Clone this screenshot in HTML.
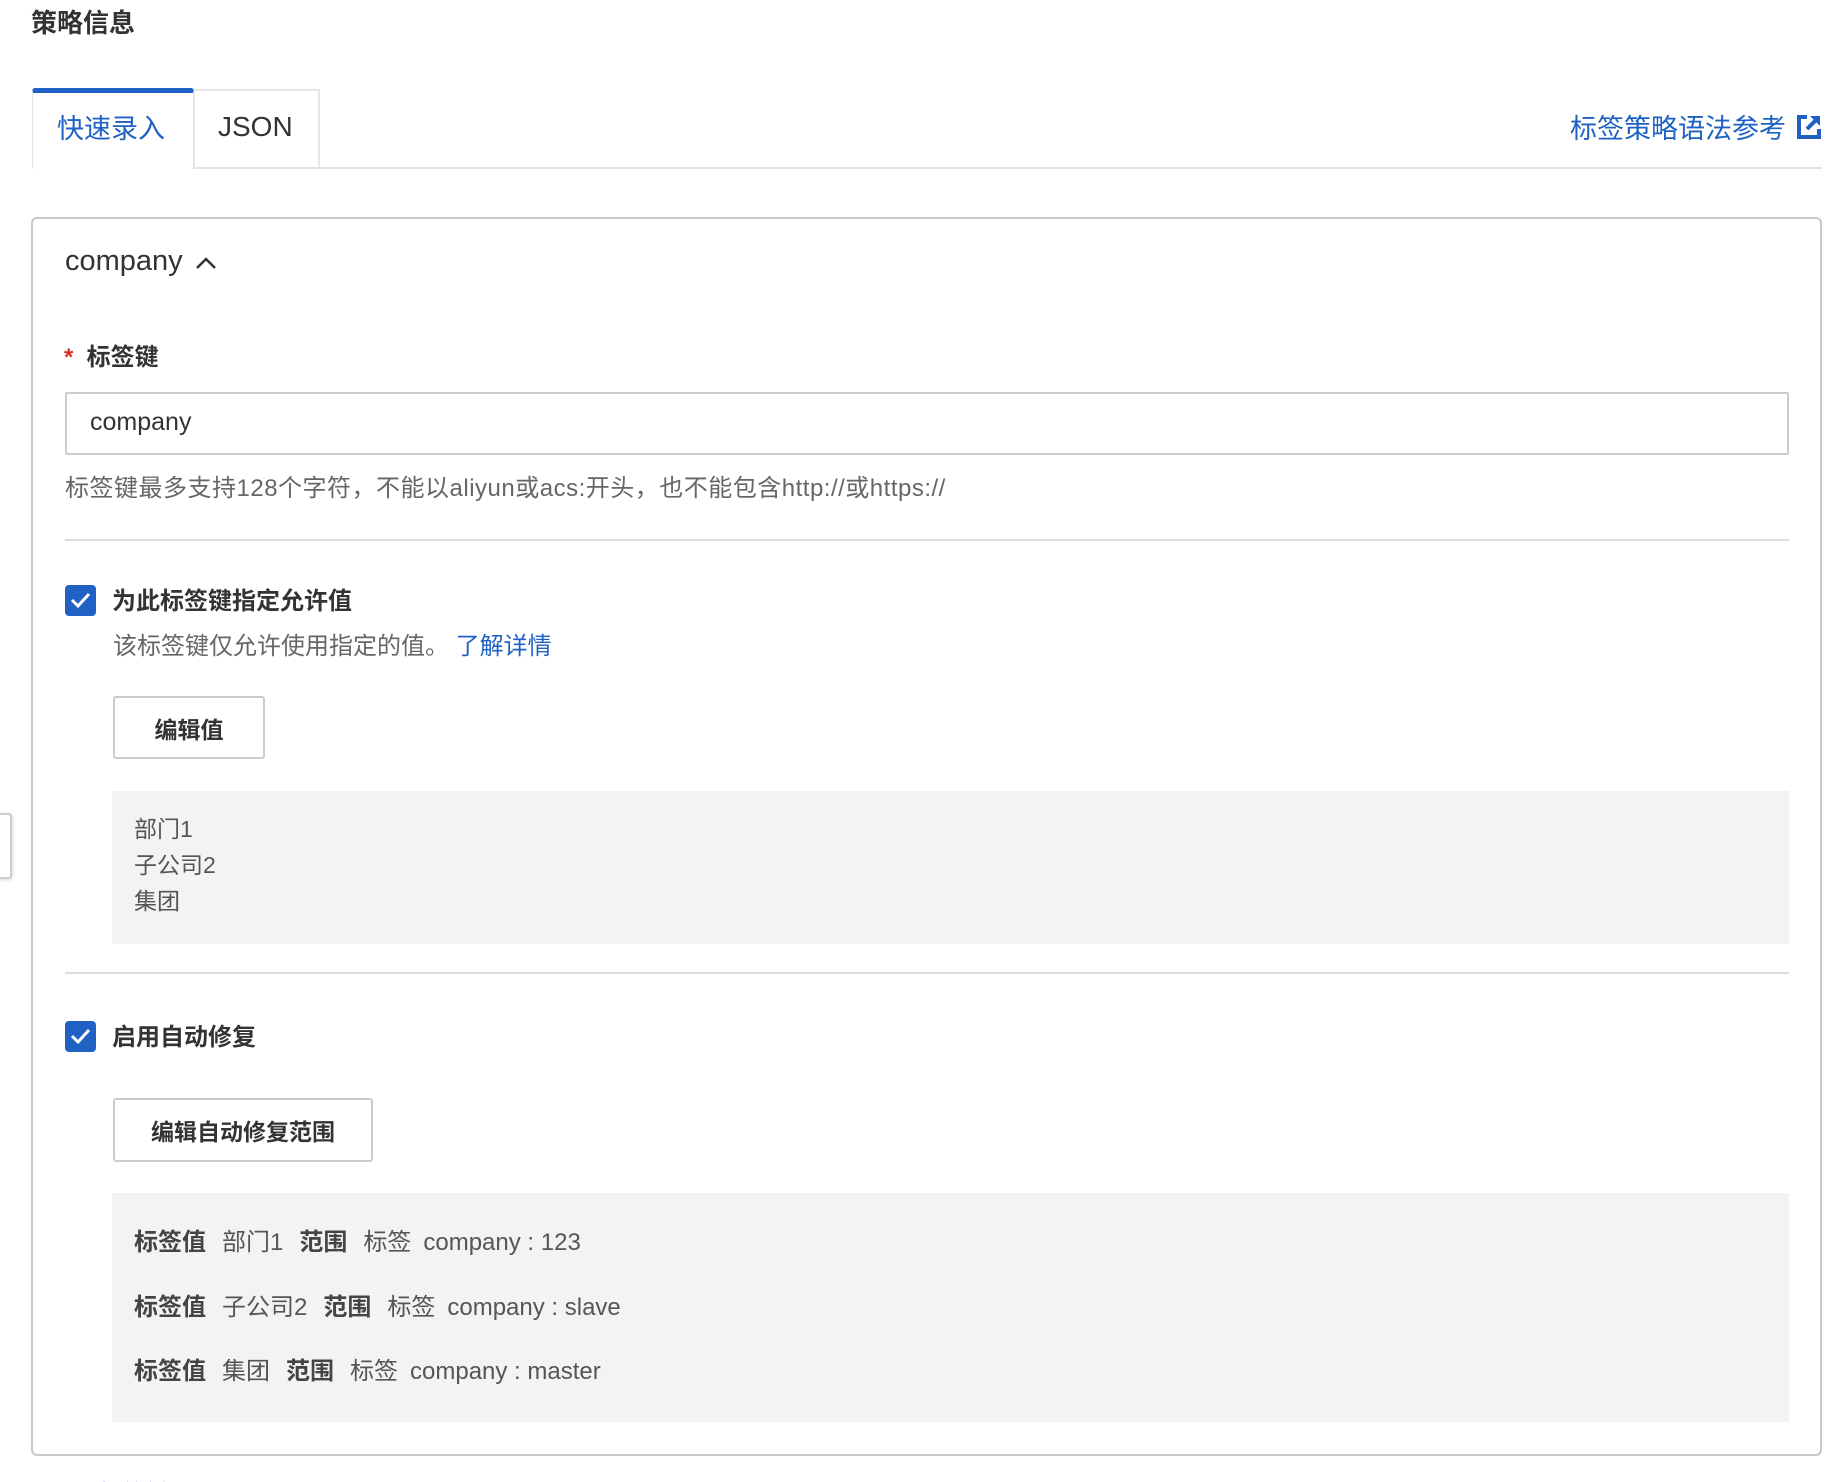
<!DOCTYPE html>
<html><head><meta charset="utf-8"><style>
*{margin:0;padding:0;box-sizing:border-box}
html,body{width:1844px;height:1482px;overflow:hidden;background:#fff}
body{position:relative;font-family:"Liberation Sans","Noto Sans CJK SC",sans-serif;color:#333}
.a{position:absolute;white-space:nowrap}
.blue{color:#2062c4}
.b{font-weight:bold}
.cb{position:absolute;width:31px;height:31px;background:#2062c4;border-radius:4px}
.btn{position:absolute;border:2px solid #ccc;border-radius:3px;background:#fff;font-size:23px;font-weight:bold;display:flex;align-items:center;justify-content:center;color:#333}
.gray{position:absolute;background:#f2f3f5}
.hr{position:absolute;height:2px;background:#ddd}
.row{position:absolute;left:134px;font-size:24px;color:#555}
.row b{color:#444}
.row span{margin-right:16px}
.row span.k{margin-right:12px}
</style></head><body>
<div class="a b" style="left:31px;top:3px;font-size:26px;color:#333">策略信息</div>

<div class="a" style="left:32px;top:88px;width:162px;height:81px;border:1px solid #e3e3e3;border-bottom:none;border-top:5px solid #2062c4;border-radius:3px 3px 0 0;background:#fff;z-index:2"></div>
<div class="a blue" style="left:57px;top:107px;font-size:27px;z-index:3">快速录入</div>
<div class="a" style="left:193px;top:89px;width:127px;height:79px;border:2px solid #e6e6e6;border-bottom:none"></div>
<div class="a" style="left:218px;top:111px;font-size:28px;color:#333">JSON</div>
<div class="hr" style="left:32px;top:167px;width:1790px;background:#e3e3e3"></div>
<div class="a blue" style="left:1570px;top:107px;font-size:27px">标签策略语法参考</div>
<svg class="a" style="left:1796px;top:114px" width="26" height="26" viewBox="0 0 26 26"><path d="M11 3H3v20h20v-8" fill="none" stroke="#2062c4" stroke-width="4"/><path d="M14 2h10v10z" fill="#2062c4"/><path d="M22 4L11 15" stroke="#2062c4" stroke-width="4"/></svg>

<div class="a" style="left:31px;top:217px;width:1791px;height:1239px;border:2px solid #c8c8c8;border-radius:6px"></div>
<div class="a" style="left:65px;top:245px;font-size:29px;color:#333">company</div>
<svg class="a" style="left:194px;top:255px" width="24" height="16" viewBox="0 0 24 16"><path d="M3 13L12 4l9 9" fill="none" stroke="#333" stroke-width="2.5"/></svg>

<div class="a b" style="left:64px;top:337px;font-size:24px"><span style="color:#d93026">*</span>&nbsp; 标签键</div>
<div class="a" style="left:65px;top:392px;width:1724px;height:63px;border:2px solid #ccc;border-radius:2px"></div>
<div class="a" style="left:90px;top:408px;font-size:25px;color:#333">company</div>
<div class="a" style="left:65px;top:468px;font-size:24px;color:#666;letter-spacing:0.5px">标签键最多支持128个字符，不能以aliyun或acs:开头，也不能包含http://或https://</div>
<div class="hr" style="left:65px;top:539px;width:1724px"></div>

<div class="cb" style="left:65px;top:585px"></div>
<svg class="a" style="left:65px;top:585px" width="31" height="31"><path d="M7 15l6 6 11-12" fill="none" stroke="#fff" stroke-width="3"/></svg>
<div class="a b" style="left:112px;top:581px;font-size:24px;color:#333">为此标签键指定允许值</div>
<div class="a" style="left:113px;top:626px;font-size:24px;color:#666">该标签键仅允许使用指定的值。 <span class="blue">了解详情</span></div>
<div class="btn" style="left:113px;top:696px;width:152px;height:63px">编辑值</div>
<div class="gray" style="left:112px;top:791px;width:1677px;height:153px"></div>
<div class="a" style="left:134px;top:811px;font-size:23px;color:#555;line-height:36px">部门1<br>子公司2<br>集团</div>
<div class="hr" style="left:65px;top:972px;width:1724px"></div>

<div class="cb" style="left:65px;top:1021px"></div>
<svg class="a" style="left:65px;top:1021px" width="31" height="31"><path d="M7 15l6 6 11-12" fill="none" stroke="#fff" stroke-width="3"/></svg>
<div class="a b" style="left:112px;top:1017px;font-size:24px;color:#333">启用自动修复</div>
<div class="btn" style="left:113px;top:1098px;width:260px;height:64px">编辑自动修复范围</div>
<div class="gray" style="left:112px;top:1193px;width:1677px;height:229px"></div>
<div class="a row" style="top:1222px"><span><b>标签值</b></span><span>部门1</span><span><b>范围</b></span><span class="k">标签</span>company : 123</div>
<div class="a row" style="top:1287px"><span><b>标签值</b></span><span>子公司2</span><span><b>范围</b></span><span class="k">标签</span>company : slave</div>
<div class="a row" style="top:1351px"><span><b>标签值</b></span><span>集团</span><span><b>范围</b></span><span class="k">标签</span>company : master</div>

<div class="a blue" style="left:30px;top:1474px;font-size:24px">+ 添加标签键</div>
<div class="a" style="left:-6px;top:813px;width:18px;height:66px;border:2px solid #ccc;border-radius:4px;background:#fff;box-shadow:1px 1px 3px rgba(0,0,0,.15)"></div>
</body></html>
